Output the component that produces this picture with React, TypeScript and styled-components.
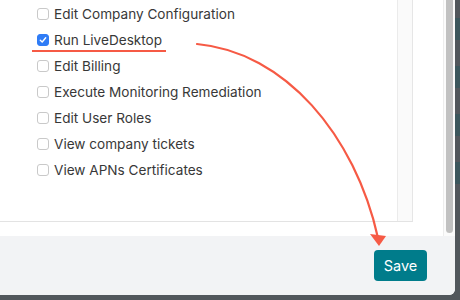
import styled, { createGlobalStyle } from "styled-components";

const GlobalStyle = createGlobalStyle`
  html, body {
    margin: 0;
    padding: 0;
    background: #52575c;
  }
  body {
    font-family: "Inter", "Liberation Sans", sans-serif;
  }
`;

const Screen = styled.div`
  position: relative;
  width: 460px;
  height: 300px;
  display: flex;
  background: #52575c;
  overflow: hidden;
`;

const Modal = styled.div`
  width: 455px;
  height: 295px;
  background: #ffffff;
  border-radius: 0 0 6px 0;
  display: flex;
  flex-direction: column;
  overflow: hidden;
`;

const Body = styled.div`
  display: flex;
  height: 236px;
`;

const Content = styled.div`
  flex: 1;
  padding-bottom: 14px;
`;

const ListBox = styled.div`
  width: 413px;
  height: 222px;
  box-sizing: border-box;
  border-right: 1px solid #e6e6e6;
  border-bottom: 1px solid #e3e3e3;
  display: flex;
`;

const List = styled.div`
  flex: 1;
  padding: 1px 0 0 37px;
  display: flex;
  flex-direction: column;
`;

const InnerTrack = styled.div`
  width: 14px;
  background: #fafafa;
  border-left: 1px solid #ebebeb;
`;

const ScrollTrack = styled.div`
  width: 12px;
  border-left: 1px solid #ededed;
  padding: 0 2px 0 2px;
  box-sizing: border-box;
  background: #fbfbfb;
`;

const Thumb = styled.div`
  width: 7px;
  height: 233px;
  background: #c1c1c1;
  border-radius: 0 0 4px 4px;
`;

const Row = styled.label`
  height: 26px;
  display: flex;
  align-items: center;
  gap: 5px;
  font-size: 13.6px;
  color: #383838;
`;

const Box = styled.span<{ $checked?: boolean }>`
  width: 12px;
  height: 12px;
  box-sizing: border-box;
  border-radius: 3px;
  border: 1px solid ${(p) => (p.$checked ? "#2f7cf6" : "#c9c9c9")};
  background: ${(p) => (p.$checked ? "#2f7cf6" : "#ffffff")};
  display: flex;
  align-items: center;
  justify-content: center;
`;

const Footer = styled.div`
  flex: 1;
  background: #f2f3f5;
  display: flex;
  justify-content: flex-end;
  align-items: flex-start;
  padding: 14px 28px 0 0;
`;

const SaveButton = styled.button`
  width: 53px;
  height: 31px;
  border: none;
  border-radius: 4px;
  background: #007c8b;
  color: #ffffff;
  font-family: "Inter", "Liberation Sans", sans-serif;
  font-size: 14.5px;
  padding: 0;
`;

const Backdrop = styled.div`
  flex: 1;
  display: flex;
  flex-direction: column;
  gap: 26px;
  padding-top: 18px;
`;

const Ghost = styled.div`
  height: 22px;
  background: #3c575d;
`;

const Underline = styled.div`
  position: absolute;
  left: 32px;
  top: 50px;
  width: 134px;
  height: 2px;
  background: #f65a45;
`;

const Overlay = styled.svg`
  position: absolute;
  left: 0;
  top: 0;
  pointer-events: none;
`;

const permissions = [
  { label: "Edit Company Configuration", checked: false },
  { label: "Run LiveDesktop", checked: true },
  { label: "Edit Billing", checked: false },
  { label: "Execute Monitoring Remediation", checked: false },
  { label: "Edit User Roles", checked: false },
  { label: "View company tickets", checked: false },
  { label: "View APNs Certificates", checked: false },
];

const Check = () => (
  <svg width="8" height="8" viewBox="0 0 8 8">
    <path d="M1.3 4.2 L3.2 6 L6.7 1.8" fill="none" stroke="#fff" strokeWidth="1.4" strokeLinecap="round" strokeLinejoin="round" />
  </svg>
);

export default function App() {
  return (
    <>
      <GlobalStyle />
      <Screen>
        <Modal>
          <Body>
            <Content>
              <ListBox>
                <List>
                  {permissions.map((p) => (
                    <Row key={p.label}>
                      <Box $checked={p.checked}>{p.checked && <Check />}</Box>
                      {p.label}
                    </Row>
                  ))}
                </List>
                <InnerTrack />
              </ListBox>
            </Content>
            <ScrollTrack>
              <Thumb />
            </ScrollTrack>
          </Body>
          <Footer>
            <SaveButton>Save</SaveButton>
          </Footer>
        </Modal>
        <Backdrop>
          <Ghost />
          <Ghost />
          <Ghost />
          <Ghost />
        </Backdrop>
        <Underline />
        <Overlay width="460" height="300" viewBox="0 0 460 300">
          <path d="M197 44 C 285 52, 355 135, 378 238" fill="none" stroke="#f65a45" strokeWidth="2.2" strokeLinecap="round" />
          <path d="M370 234 L386 236 L379 246 Z" fill="#f65a45" />
        </Overlay>
      </Screen>
    </>
  );
}
